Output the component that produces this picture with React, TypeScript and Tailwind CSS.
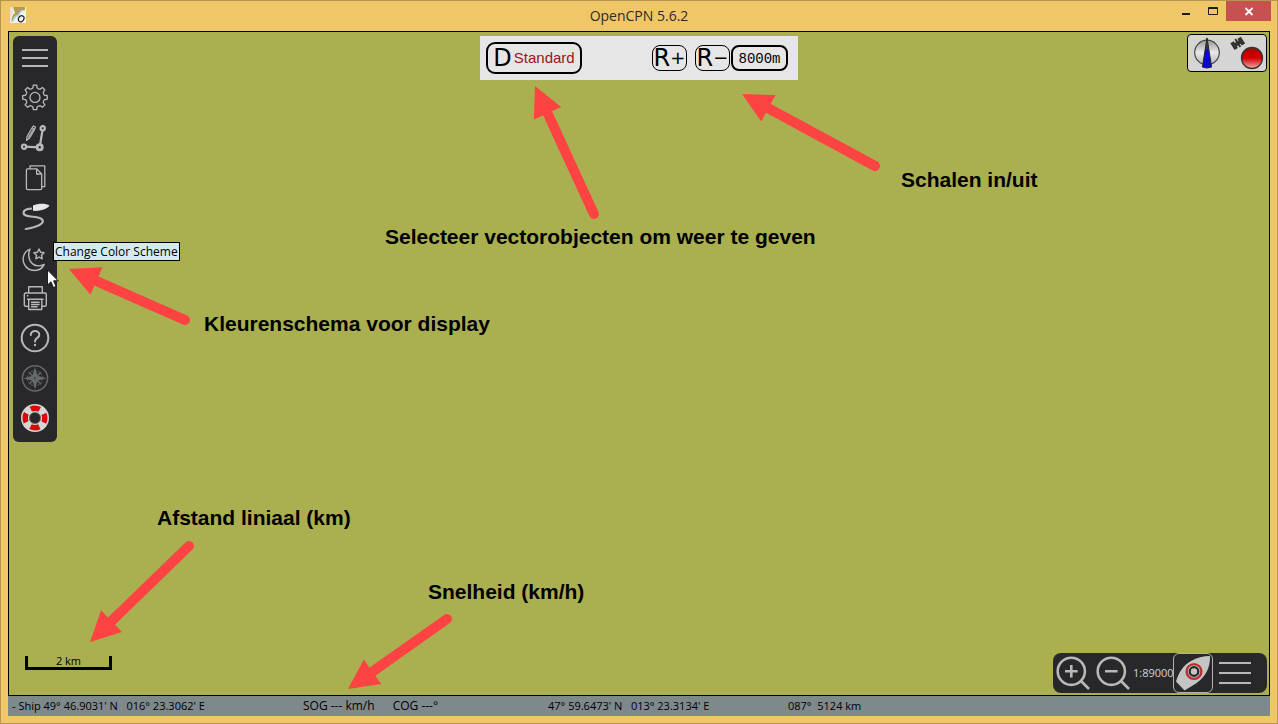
import type { ReactNode } from "react";

type Point = [number, number];

const arrows: { tip: Point; tail: Point }[] = [
  { tip: [535, 86], tail: [594, 214] },
  { tip: [742, 94], tail: [875, 166] },
  { tip: [69, 269], tail: [185, 320] },
  { tip: [90, 642], tail: [189, 546] },
  { tip: [348, 689], tail: [447, 619] },
];

function Arrow({ tip, tail }: { tip: Point; tail: Point }) {
  const dx = tail[0] - tip[0];
  const dy = tail[1] - tip[1];
  const len = Math.hypot(dx, dy);
  const ux = dx / len;
  const uy = dy / len;
  const bx = tip[0] + ux * 30;
  const by = tip[1] + uy * 30;
  const head = `${tip[0]},${tip[1]} ${bx - uy * 15},${by + ux * 15} ${bx + uy * 15},${by - ux * 15}`;
  return (
    <g>
      <line x1={bx - ux * 3} y1={by - uy * 3} x2={tail[0]} y2={tail[1]} stroke="#fe4343" strokeWidth="10" strokeLinecap="round" />
      <polygon points={head} fill="#fe4343" />
    </g>
  );
}

function gearPath(cx: number, cy: number) {
  const pts: string[] = [];
  for (let i = 0; i < 8; i++) {
    const a = (i * Math.PI) / 4 - Math.PI / 2;
    const at = (da: number, r: number) => `${(cx + r * Math.cos(a + da)).toFixed(2)} ${(cy + r * Math.sin(a + da)).toFixed(2)}`;
    pts.push(`${i === 0 ? "M" : "L"}${at(-0.22, 9.8)} L${at(-0.14, 12.4)} L${at(0.14, 12.4)} L${at(0.22, 9.8)} Q${at(0.39, 8.8)} ${at(0.565, 9.8)}`);
  }
  return pts.join(" ") + "Z";
}

function starPoints(cx: number, cy: number, n: number, outer: number, inner: number) {
  return Array.from({ length: n * 2 }, (_, i) => {
    const a = (i * Math.PI) / n - Math.PI / 2;
    const r = i % 2 ? inner : outer;
    return `${(cx + r * Math.cos(a)).toFixed(2)},${(cy + r * Math.sin(a)).toFixed(2)}`;
  }).join(" ");
}

const tools: { label: string; icon: ReactNode }[] = [
  { label: "Menu", icon: <path d="M9 12H35M9 20H35M9 28H35" strokeWidth="2" /> },
  {
    label: "Options",
    icon: (
      <g strokeWidth="1.3" strokeLinejoin="round">
        <path d={gearPath(22, 19.4)} />
        <circle cx="22" cy="19.4" r="5" />
      </g>
    ),
  },
  {
    label: "Create Route",
    icon: (
      <g>
        <path d="M29.7 11L26.7 29.3L11 28.7" strokeWidth="2.2" />
        <circle cx="29.7" cy="10.3" r="2.1" strokeWidth="2.2" fill="#28282a" />
        <circle cx="26.7" cy="29.3" r="2.6" strokeWidth="2.8" fill="#28282a" />
        <circle cx="11" cy="28.7" r="2.1" strokeWidth="2.2" fill="#28282a" />
        <path d="M20.4 8L22.4 9L21.6 11.5L16.6 20L13.6 22.2L14 18.6L19 9.8Z" strokeWidth="1.2" />
        <path d="M19 9.8L21.6 11.5M20.5 11L15.4 19.6" strokeWidth="1.2" />
      </g>
    ),
  },
  {
    label: "Charts",
    icon: (
      <g strokeWidth="1.3" strokeLinejoin="round">
        <path d="M17 10.8V7.9H31.8V28.6H29" />
        <path d="M14.6 10.8H23.6L28.7 16V30.6Q28.7 31.7 27.6 31.7H14.6Q13.4 31.7 13.4 30.6V12Q13.4 10.8 14.6 10.8Z" />
        <path d="M23.6 10.8V16H28.7" />
      </g>
    ),
  },
  {
    label: "Track",
    icon: (
      <g>
        <path d="M18 10.7C13.5 11 10.5 12.6 10.5 15C10.5 20.5 29.8 17 29.8 23C29.8 27.5 20 29.7 12.8 31" strokeWidth="2.2" strokeLinecap="round" />
        <path d="M20 7.4C25 5.4 33 5.2 36.5 7.6C34 11.8 26 13.4 20 12.8Z" fill="#e6e6e6" stroke="none" />
      </g>
    ),
  },
  {
    label: "Change Color Scheme",
    icon: (
      <g strokeWidth="1.4" strokeLinejoin="round">
        <path d="M17 11.2C10.6 13.6 8.6 20.8 11.4 26.4C15.5 34.5 27.5 34.6 31.2 26.4C25.5 29.4 19.4 27.6 17 22.6C15.3 18.8 15.4 14.6 17 11.2Z" />
        <polygon points={starPoints(26, 16.4, 5, 5.4, 2.6)} />
      </g>
    ),
  },
  {
    label: "Print Chart",
    icon: (
      <g strokeWidth="1.4" strokeLinejoin="round">
        <path d="M15.7 15V8.7H29.3V15" />
        <path d="M15.7 28.3H12.6Q11.3 28.3 11.3 27V16.5Q11.3 15 12.6 15H32Q33.3 15 33.3 16.5V27Q33.3 28.3 32 28.3H28.8" />
        <path d="M14 21.3H30.6M15.7 21.3V31.5H28.8V21.3M18 24.2H26.6M18 26.5H26.6M18 28.8H24.5M13.8 17.8H15.4" />
      </g>
    ),
  },
  {
    label: "Help",
    icon: (
      <g strokeLinecap="round">
        <circle cx="22" cy="20" r="13.3" strokeWidth="2" />
        <path d="M17.8 17C17.8 11.8 26.3 11.8 26.3 17C26.3 20 22 19.8 22 23.4" strokeWidth="2" />
        <circle cx="22" cy="27" r="1.2" fill="#b8b8b8" stroke="none" />
      </g>
    ),
  },
  {
    label: "About",
    icon: (
      <g stroke="#66696a">
        <circle cx="22" cy="20.3" r="12.6" strokeWidth="1.5" />
        <circle cx="22" cy="20.3" r="7.6" strokeWidth="1" strokeDasharray="2 1.5" />
        <polygon points={starPoints(22, 20.3, 4, 11.5, 3.6)} fill="#66696a" stroke="none" />
        <path d="M16 14.3L28 26.3M28 14.3L16 26.3" strokeWidth="1.4" />
        <circle cx="22" cy="20.3" r="1.8" fill="#3c5560" strokeWidth="1" />
      </g>
    ),
  },
  {
    label: "Man Overboard",
    icon: (
      <g>
        <circle cx="22" cy="20" r="9.8" stroke="#d6d6d6" strokeWidth="8.4" />
        <circle cx="22" cy="20" r="9.8" stroke="#dc0808" strokeWidth="5.4" strokeDasharray="9.2 6.19" strokeDashoffset="4.6" />
        <circle cx="22" cy="20" r="5.6" fill="#28282a" stroke="#777" strokeWidth="0.8" />
      </g>
    ),
  },
];

const captions = [
  { text: "Schalen in/uit", place: "left-[892px] top-[136px]" },
  { text: "Selecteer vectorobjecten om weer te geven", place: "left-[376px] top-[193px]" },
  { text: "Kleurenschema voor display", place: "left-[195px] top-[280px]" },
  { text: "Afstand liniaal (km)", place: "left-[148px] top-[474px]" },
  { text: "Snelheid (km/h)", place: "left-[419px] top-[548px]" },
];

function TitleBar() {
  return (
    <header className="grid h-[30px] grid-cols-[1fr_auto_1fr] items-start">
      <svg className="mt-1.5 ml-[9px] size-4" viewBox="0 0 16 16" aria-hidden="true">
        <rect width="16" height="16" fill="#f1f3f2" />
        <path d="M3 0H15V3L11 4L9 8L5 9L3 13L1 14L3 8L5 6Z" fill="#b49a58" />
        <path d="M15 3L11 5L9 9L6 10L3 15L1 15L5 9L8 7L11 3Z" fill="#a9d1ef" />
        <path d="M0 0H3L4 4L1 12H0Z" fill="#ece2cf" />
        <ellipse cx="11.2" cy="11.7" rx="2.6" ry="3.2" fill="none" stroke="#222" strokeWidth="1.2" transform="rotate(30 11.2 11.7)" />
      </svg>
      <h1 className="text-sm leading-[29px] text-[#2e2b22]">OpenCPN 5.6.2</h1>
      <div className="flex h-5 justify-end pr-1.5">
        <button aria-label="Minimize" className="flex w-[27px] justify-center">
          <svg className="h-5 w-[27px]" viewBox="0 0 27 20"><path d="M10 13H18" stroke="#1e1b14" strokeWidth="2" /></svg>
        </button>
        <button aria-label="Maximize" className="flex w-[27px] justify-center">
          <svg className="h-5 w-[27px]" viewBox="0 0 27 20"><path d="M9.5 6.5H18.5V13.5H9.5ZM9 7.5H19" fill="none" stroke="#1e1b14" /></svg>
        </button>
        <button aria-label="Close" className="flex w-[45px] justify-center bg-[#c75050]">
          <svg className="h-5 w-[45px]" viewBox="0 0 45 20"><path d="M19.5 7L26.5 14M26.5 7L19.5 14" stroke="#fff" strokeWidth="1.8" /></svg>
        </button>
      </div>
    </header>
  );
}

function MainToolbar() {
  return (
    <nav aria-label="Main toolbar" className="absolute top-1 left-1 flex w-11 flex-col rounded-md bg-[#28282a] pt-0.5 pb-1">
      {tools.map((t) => (
        <button key={t.label} aria-label={t.label} className="h-10 w-11">
          <svg className="h-10 w-11" viewBox="0 0 44 40" fill="none" stroke="#b8b8b8">{t.icon}</svg>
        </button>
      ))}
    </nav>
  );
}

function VectorToolbar() {
  return (
    <div className="absolute top-1 left-1/2 flex h-11 w-[318px] -translate-x-1/2 items-center justify-between bg-[#e6e6e6] pr-2.5 pl-1.5 text-black">
      <button className="flex h-8 w-24 items-center justify-center gap-0.5 rounded-[9px] border-2 border-black">
        <span className="font-['DejaVu_Sans'] text-2xl leading-7">D</span>
        <span className="font-['Liberation_Sans'] text-[15px] leading-7 text-[#99151c]">Standard</span>
      </button>
      <div className="flex">
        <button className="mr-2 flex h-[26px] w-[35px] items-center justify-center rounded-lg border border-black font-['DejaVu_Sans'] leading-6">
          <span className="text-2xl leading-6">R</span><span className="text-lg leading-6">+</span>
        </button>
        <button className="mr-px flex h-[26px] w-[35px] items-center justify-center rounded-lg border border-black font-['DejaVu_Sans'] leading-6">
          <span className="text-2xl leading-6">R</span><span className="text-lg leading-6">−</span>
        </button>
        <button className="flex h-[26px] w-[57px] items-center justify-center rounded-lg border-2 border-black pt-0.5 font-['Liberation_Mono'] text-sm leading-5">8000m</button>
      </div>
    </div>
  );
}

function GpsPanel() {
  return (
    <div className="absolute top-0.5 right-0.5 h-[38px] w-20 rounded border border-black bg-[#d5d5d5]">
      <svg className="h-9 w-[78px]" viewBox="0 0 78 36" role="img" aria-label="Compass and GPS status">
        <defs>
          <linearGradient id="dial" x1="0" y1="0" x2="0" y2="1">
            <stop offset="0" stopColor="#999" /><stop offset="0.5" stopColor="#e8e8e8" /><stop offset="1" stopColor="#b5b5b5" />
          </linearGradient>
          <linearGradient id="lamp" x1="0" y1="0" x2="0" y2="1">
            <stop offset="0" stopColor="#b00000" /><stop offset="0.5" stopColor="#d40000" /><stop offset="1" stopColor="#f0aaaa" />
          </linearGradient>
        </defs>
        <circle cx="19" cy="17.5" r="12.3" fill="url(#dial)" stroke="#444" strokeWidth="1.2" />
        <path d="M19 3L23.6 32Q19 34 14.4 32Z" fill="#0808d8" stroke="#222" />
        <path d="M19 2L20.8 14H17.2Z" fill="#333" />
        <g transform="rotate(-32 49.5 8.5)" fill="#333">
          <path d="M43.5 4.5H47.5V7L49 7.5V3.5H51V7.5L52 7V4.5H56V12.5H52V10L51 9.5V13H49V9.5L47.5 10V12.5H43.5Z" />
          <rect x="46" y="6.5" width="7" height="4" />
        </g>
        <circle cx="64" cy="23" r="10.5" fill="url(#lamp)" stroke="#333" strokeWidth="1.3" />
      </svg>
    </div>
  );
}

function ZoomBar() {
  return (
    <div className="absolute right-0.5 bottom-0.5 flex h-10 w-[214px] rounded-lg bg-[#28282a]">
      <button aria-label="Zoom in" className="w-10">
        <svg className="size-10" viewBox="0 0 40 40" fill="none" stroke="#b8b8b8" strokeWidth="2.6">
          <circle cx="18.3" cy="18.3" r="13.6" /><path d="M28 28L36 36M12 18.3H24.6M18.3 12V24.6" />
        </svg>
      </button>
      <button aria-label="Zoom out" className="w-10">
        <svg className="size-10" viewBox="0 0 40 40" fill="none" stroke="#b8b8b8" strokeWidth="2.6">
          <circle cx="18.3" cy="18.3" r="13.6" /><path d="M28 28L36 36M12 18.3H24.6" />
        </svg>
      </button>
      <span className="w-10 text-right text-[11px] leading-[39px] text-[#c4d6e0]">1:89000</span>
      <button aria-label="Follow ship" className="w-10 rounded-md border border-[#b0b0b0]">
        <svg className="h-[38px] w-[38px]" viewBox="0 0 38 38">
          <path d="M36 2C36.5 14 31 23.5 22 29.5L10.5 36.5L2 27.5C5 18 9 11.5 17 7C23 3.5 29 2 36 2Z" fill="#c4c4c4" />
          <circle cx="20" cy="17.5" r="7.4" fill="#c4c4c4" stroke="#b83030" strokeWidth="2.4" />
          <circle cx="20" cy="17.5" r="4.3" fill="#c4c4c4" stroke="#28282a" strokeWidth="2.2" />
        </svg>
      </button>
      <button aria-label="Canvas options" className="flex-1">
        <svg className="h-10 w-11" viewBox="0 0 44 40" stroke="#b8b8b8" strokeWidth="2.2"><path d="M6 10H38M6 20H38M6 30H38" /></svg>
      </button>
    </div>
  );
}

export default function App() {
  return (
    <div className="flex min-h-screen flex-col border border-[#b8954f] bg-[#f0c768] font-['Open_Sans',sans-serif]">
      <TitleBar />
      <main className="relative mx-[7px] flex-1 overflow-hidden border border-black bg-[#aaaf50]">
        <svg className="absolute top-0 left-0 h-[663px] w-[1000px]" viewBox="9 32 1000 663" aria-hidden="true">
          {arrows.map((a) => <Arrow key={a.tip.join()} {...a} />)}
        </svg>
        {captions.map((c) => (
          <p key={c.text} className={`absolute whitespace-nowrap font-['Liberation_Sans'] text-[21px] leading-6 font-bold text-black ${c.place}`}>{c.text}</p>
        ))}
        <MainToolbar />
        <VectorToolbar />
        <GpsPanel />
        <div role="tooltip" className="absolute top-[210px] left-11 border border-black bg-[#d5e9f0] px-px text-xs leading-[17px] whitespace-nowrap text-black">Change Color Scheme</div>
        <svg className="absolute top-[237px] left-[38px] h-5 w-3" viewBox="0 0 12 20" aria-hidden="true">
          <path d="M0.5 1V16L4 12.8L6.4 18.5L9 17.4L6.6 11.8H11.2Z" fill="#fff" stroke="#111" strokeWidth="0.9" />
        </svg>
        <div className="absolute bottom-[25px] left-4 h-3.5 w-[87px] border-x-[3px] border-b-[3px] border-black text-center text-[11px] leading-[9px] text-black">2 km</div>
        <ZoomBar />
      </main>
      <footer className="mx-[7px] mb-[7px] grid h-5 grid-cols-[291fr_245fr_240fr_486fr] bg-[#7e898c] text-[11px] leading-5 whitespace-pre text-black">
        <span className="pl-1">- Ship 49° 46.9031' N   016° 23.3062' E</span>
        <span className="flex gap-[18px] pl-1 text-xs leading-5"><span>SOG --- km/h</span><span>COG ---°</span></span>
        <span className="pl-1">47° 59.6473' N   013° 23.3134' E</span>
        <span className="pl-1">087°  5124 km</span>
      </footer>
    </div>
  );
}
